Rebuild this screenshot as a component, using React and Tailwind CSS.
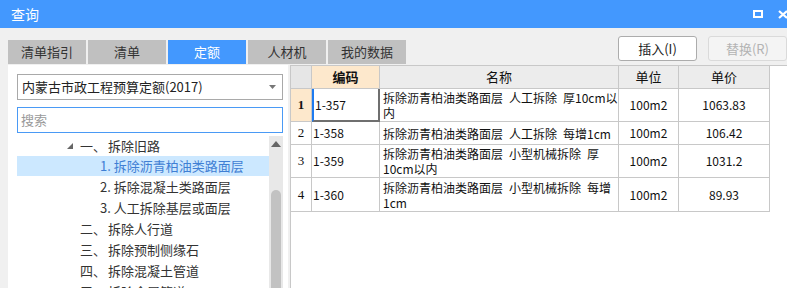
import React from "react";

const font = { fontFamily: '"Noto Sans CJK SC", "Noto Sans", sans-serif' };

const tabs = ["清单指引", "清单", "定额", "人材机", "我的数据"];

const S = "\u2002";

const rows = [
  { n: "1", code: "1-357", lines: ["拆除沥青柏油类路面层" + S + "人工拆除" + S + "厚10cm以", "内"], unit: "100m2", price: "1063.83", h: "h-[33px]", sel: true },
  { n: "2", code: "1-358", lines: ["拆除沥青柏油类路面层" + S + "人工拆除" + S + "每增1cm"], unit: "100m2", price: "106.42", h: "h-[23px]" },
  { n: "3", code: "1-359", lines: ["拆除沥青柏油类路面层" + S + "小型机械拆除" + S + "厚", "10cm以内"], unit: "100m2", price: "1031.2", h: "h-[33px]" },
  { n: "4", code: "1-360", lines: ["拆除沥青柏油类路面层" + S + "小型机械拆除" + S + "每增", "1cm"], unit: "100m2", price: "89.93", h: "h-[34px]" },
];

const tree = [
  { kind: "top", num: "一、", name: "拆除旧路", arrow: true, h: "h-[20px]" },
  { kind: "sub", text: "1. 拆除沥青柏油类路面层", sel: true, h: "h-[20px]" },
  { kind: "sub", text: "2. 拆除混凝土类路面层", h: "h-[21px]" },
  { kind: "sub", text: "3. 人工拆除基层或面层", h: "h-[21px]" },
  { kind: "top", num: "二、", name: "拆除人行道", h: "h-[21px]" },
  { kind: "top", num: "三、", name: "拆除预制侧缘石", h: "h-[21px]" },
  { kind: "top", num: "四、", name: "拆除混凝土管道", h: "h-[21px]" },
  { kind: "top", num: "五、", name: "拆除金属管道", h: "h-[21px]" },
];

export default function App() {
  return (
    <div className="w-[787px] h-[288px] overflow-hidden bg-[#f0f0f0] flex flex-col" style={font}>
      {/* title bar */}
      <div className="h-[28px] shrink-0 bg-[#4398fe] flex items-center pl-[11px] text-white text-[14px]">
        <span className="leading-none">查询</span>
        <div className="ml-auto flex items-center">
          <div className="w-[10px] h-[8px] border-2 border-white mr-[15px]" />
          <svg width="10" height="9" viewBox="0 0 10 9" className="mr-[-1px]">
            <path d="M1 1 L9 8 M9 1 L1 8" stroke="white" strokeWidth="2.2" />
          </svg>
        </div>
      </div>

      {/* tabs + buttons */}
      <div className="h-[36px] shrink-0 flex">
        <div className="flex items-end gap-[2px] pl-[8px]">
          {tabs.map((t, i) => (
            <div
              key={t}
              className={
                "w-[78px] h-[24px] flex items-center justify-center text-[13px] " +
                (i === 2 ? "bg-[#4398fe] text-white" : "bg-[#c0c0c0] text-[#333]")
              }
            >
              {t}
            </div>
          ))}
        </div>
        <div className="ml-auto flex items-start gap-[11px] pt-[8px]">
          <div className="w-[79px] h-[25px] bg-white border border-[#acacac] rounded-[3px] flex items-center justify-center text-[13px] text-[#222]">
            插入(I)
          </div>
          <div className="w-[79px] h-[25px] bg-[#f4f4f4] border border-[#dadada] rounded-[3px] flex items-center justify-center text-[13px] text-[#b3b3b3]">
            替换(R)
          </div>
        </div>
      </div>

      {/* main */}
      <div className="flex-1 flex mt-[1px] min-h-0">
        {/* left panel */}
        <div className="ml-[8px] w-[280px] bg-white flex flex-col pl-[9px] pr-[5px] pt-[9px] overflow-hidden">
          <div className="h-[26px] border border-[#a9a9a9] flex items-center pl-[4px] pr-[6px] text-[13px] text-[#222]">
            <span>内蒙古市政工程预算定额(2017)</span>
            <svg width="7" height="4" viewBox="0 0 7 4" className="ml-auto">
              <path d="M0 0 L7 0 L3.5 4 Z" fill="#777" />
            </svg>
          </div>
          <div className="mt-[7px] h-[26px] border border-[#4a9af5] flex items-center pl-[3px] text-[13px] text-[#9a9a9a]">
            搜索
          </div>
          <div className="mt-[3px] flex flex-1 min-h-0">
            <div className="flex-1 flex flex-col">
              {tree.map((r, i) => (
                <div
                  key={i}
                  className={
                    r.h + " shrink-0 flex items-center text-[13px] leading-[20px] " +
                    (r.sel ? "bg-[#cce8ff] text-[#3f7fd4]" : "text-[#333]")
                  }
                >
                  {r.kind === "top" ? (
                    <>
                      <span className="w-[63px] shrink-0 flex justify-end pr-[7px]">
                        {r.arrow && (
                          <svg width="6" height="6" viewBox="0 0 6 6">
                            <path d="M6 0 L6 6 L0 6 Z" fill="#666" />
                          </svg>
                        )}
                      </span>
                      <span className="w-[28px] shrink-0">{r.num}</span>
                      <span>{r.name}</span>
                    </>
                  ) : (
                    <span className="pl-[83px] whitespace-nowrap">{r.text}</span>
                  )}
                </div>
              ))}
            </div>
            <div className="w-[14px] bg-[#e8e8e8] flex flex-col items-center shrink-0">
              <svg width="10" height="6" viewBox="0 0 10 6" className="mt-[5px]">
                <path d="M0 6 L10 6 L5 0 Z" fill="#666" />
              </svg>
              <div className="mt-[43px] w-[10px] flex-1 bg-[#c2c2c2] rounded-t-full" />
            </div>
          </div>
        </div>

        {/* right panel */}
        <div className="ml-[2px] flex-1 bg-white border-t border-l border-[#c8c8c8]">
          <div className="grid grid-cols-[21px_68px_239px_60px_91px] text-[12px] text-[#111]">
            <div className="h-[23px] bg-[#e6e6e6] border-r border-b border-[#c8c8c8]" />
            <div className="h-[23px] bg-[#fde8cc] border-r border-b border-[#c8c8c8] flex items-center justify-center font-bold text-[13px]">编码</div>
            <div className="h-[23px] bg-[#ececec] border-r border-b border-[#c8c8c8] flex items-center justify-center text-[13px]">名称</div>
            <div className="h-[23px] bg-[#ececec] border-r border-b border-[#c8c8c8] flex items-center justify-center text-[13px]">单位</div>
            <div className="h-[23px] bg-[#ececec] border-r border-b border-[#c8c8c8] flex items-center justify-center text-[13px]">单价</div>
            {rows.map((r) => (
              <React.Fragment key={r.n}>
                <div
                  className={
                    r.h + " border-r border-b border-[#c8c8c8] flex items-center justify-center text-[13px] " +
                    (r.sel ? "bg-[#fde8cc] font-bold" : "bg-white")
                  }
                  style={{ fontFamily: '"Liberation Serif", serif' }}
                >
                  {r.n}
                </div>
                <div
                  className={
                    r.h + " flex items-center pl-[1px] " +
                    (r.sel
                      ? "border-l-2 border-l-[#1e7bf0] border-r-2 border-r-[#6f6f6f] border-b-2 border-b-[#6f6f6f]"
                      : "border-r border-b border-[#c8c8c8]")
                  }
                >
                  {r.code}
                </div>
                <div className={r.h + " border-r border-b border-[#c8c8c8] flex flex-col justify-center pl-[3px] leading-[15px] text-[12px]"}>
                  {r.lines.map((l, i) => (
                    <span key={i} className="whitespace-nowrap">{l}</span>
                  ))}
                </div>
                <div className={r.h + " border-r border-b border-[#c8c8c8] flex items-center justify-center"}>{r.unit}</div>
                <div className={r.h + " border-r border-b border-[#c8c8c8] flex items-center justify-center"}>{r.price}</div>
              </React.Fragment>
            ))}
          </div>
        </div>
      </div>
    </div>
  );
}
